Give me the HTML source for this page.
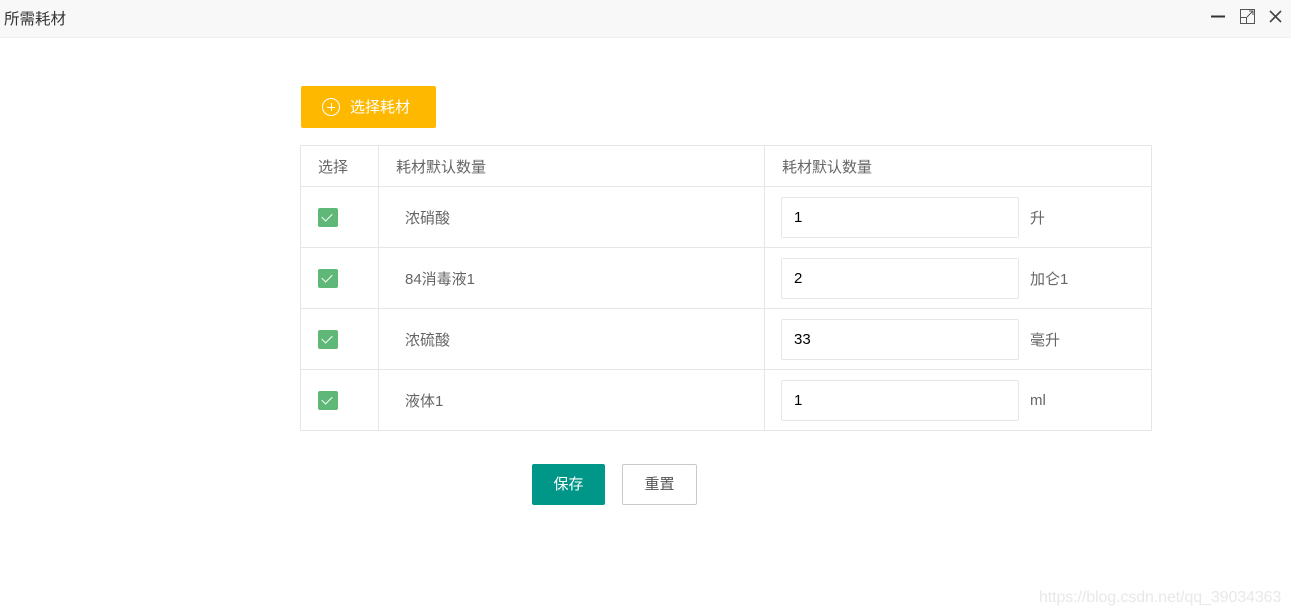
<!DOCTYPE html>
<html><head><meta charset="utf-8"><style>
*{box-sizing:border-box;margin:0;padding:0}
body{width:1291px;height:616px;background:#fff;font-family:"Liberation Sans","Noto Sans CJK SC",sans-serif;font-size:15px;color:#666;position:relative;overflow:hidden}
.hd{position:absolute;left:0;top:0;width:1291px;height:38px;background:#f8f8f8;border-bottom:1px solid #eee}
.hd .t{position:absolute;left:4px;top:7px;color:#333;font-size:15.5px}
.ab{position:absolute;}
.btn1{position:absolute;left:301px;top:86px;width:135px;height:42px;background:#ffb800;border-radius:2px;color:#fff;font-size:15px}
.btn1 .c{position:absolute;left:21px;top:12px;width:18px;height:18px;border:1px solid #fff;border-radius:50%}
.btn1 .c:before{content:"";position:absolute;left:4px;top:8px;width:8px;height:1px;background:#fff}
.btn1 .c:after{content:"";position:absolute;left:8px;top:4px;width:1px;height:8px;background:#fff}
.btn1 span{position:absolute;left:49px;top:10px}
table{position:absolute;left:300px;top:145px;border-collapse:collapse;width:852px}
td{border:1px solid #e6e6e6;height:61px;padding:0;vertical-align:middle}
tr.h td{height:41px;padding-left:17px}
.cb{display:inline-block;width:20px;height:19px;background:#5fb878;border-radius:2px;margin-left:17px;position:relative;vertical-align:middle}
.cb:after{content:"";position:absolute;left:6px;top:3px;width:5px;height:9px;border-right:1.5px solid #fff;border-bottom:1.5px solid #fff;transform:rotate(45deg)}
.nm{padding-left:26px}
.inp{display:inline-block;width:238px;height:41px;border:1px solid #e6e6e6;border-radius:2px;margin-left:16px;padding-left:12px;line-height:39px;color:#000;vertical-align:middle}
.u{display:inline-block;margin-left:11px;vertical-align:middle}
.save{position:absolute;left:532px;top:464px;width:73px;height:41px;background:#009688;color:#fff;border-radius:2px;text-align:center;line-height:41px}
.rst{position:absolute;left:622px;top:464px;width:75px;height:41px;border:1px solid #c9c9c9;color:#555;border-radius:2px;text-align:center;line-height:39px}
.wm{position:absolute;left:1039px;top:589px;color:#e8e8e8;font-size:16px;letter-spacing:-0.1px}
</style></head><body>
<div class="hd"><div class="t">所需耗材</div>
<svg class="ab" style="left:1209px;top:8px" width="80" height="18" viewBox="0 0 80 18">
<line x1="2" y1="8.5" x2="16" y2="8.5" stroke="#333" stroke-width="2"/>
<rect x="31.5" y="1.5" width="14" height="14" fill="none" stroke="#555" stroke-width="1"/>
<rect x="31.5" y="9.5" width="6" height="6" fill="#f8f8f8" stroke="#555"/>
<path d="M38 9 L44 3 M40 3 H44 V7" fill="none" stroke="#555"/>
<path d="M61 3 L72 14 M72 3 L61 14" stroke="#444" stroke-width="1.6"/>
</svg></div>
<div class="btn1"><div class="c"></div><span>选择耗材</span></div>
<table>
<tr class="h"><td style="width:78px">选择</td><td style="width:386px">耗材默认数量</td><td>耗材默认数量</td></tr>
<tr><td><span class="cb"></span></td><td class="nm">浓硝酸</td><td><span class="inp">1</span><span class="u">升</span></td></tr>
<tr><td><span class="cb"></span></td><td class="nm">84消毒液1</td><td><span class="inp">2</span><span class="u">加仑1</span></td></tr>
<tr><td><span class="cb"></span></td><td class="nm">浓硫酸</td><td><span class="inp">33</span><span class="u">毫升</span></td></tr>
<tr><td><span class="cb"></span></td><td class="nm">液体1</td><td><span class="inp">1</span><span class="u">ml</span></td></tr>
</table>
<div class="save">保存</div>
<div class="rst">重置</div>
<div class="wm">https://blog.csdn.net/qq_39034363</div>
</body></html>
